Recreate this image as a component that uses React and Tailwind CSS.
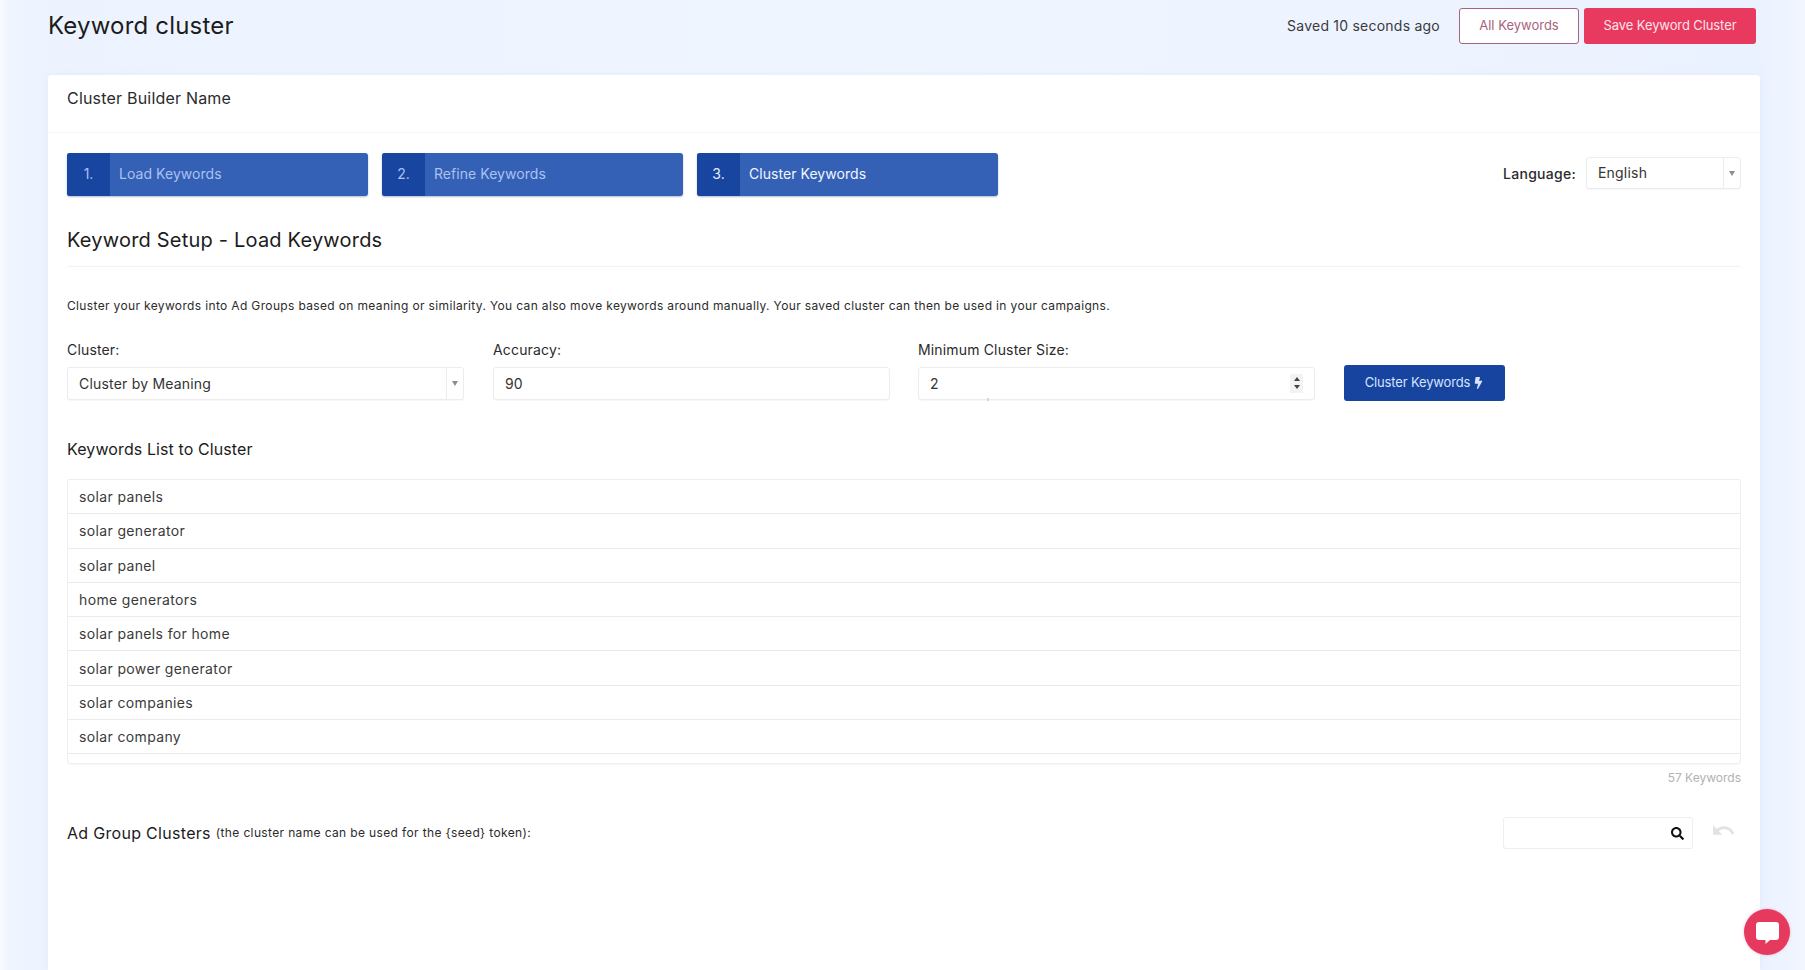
import React from "react";
import { FaSearch, FaBolt } from "react-icons/fa";
import { MdUndo } from "react-icons/md";

const keywords = ["solar panels","solar generator","solar panel","home generators","solar panels for home","solar power generator","solar companies","solar company",""];

function Step({ n, label, active }) {
  return (
    <div className="flex h-[43px] w-[301px] overflow-hidden rounded-[3px] bg-[#3461b5] shadow-[0_1px_2px_rgba(30,60,130,0.35)]">
      <div className={`flex w-[43px] items-center justify-center bg-[#17459f] pb-[2px] text-[14px] ${active ? "text-[#e6eeff]" : "text-[#a9c2f0]"}`}>{n}</div>
      <div className={`flex items-center pb-[2px] pl-[9px] text-[14px] tracking-[0.05px] ${active ? "text-[#f2f6ff]" : "text-[#a9c2f0]"}`}>{label}</div>
    </div>
  );
}

function Caret() {
  return <span className="h-0 w-0 border-x-[3px] border-t-[5px] border-x-transparent border-t-[#8d8d8d]" />;
}

function SelectBox({ value, className, caretW }) {
  return (
    <div className={`flex items-center rounded-[3px] border border-[#ececec] bg-white text-[14px] tracking-[0.2px] text-[#333] shadow-[0_1px_1px_rgba(0,0,0,0.03)] ${className}`}>
      <span className="flex-1 pb-[1px] pl-[11px]">{value}</span>
      <span className={`flex h-full items-center justify-center border-l border-[#ececec] ${caretW}`}><Caret /></span>
    </div>
  );
}

function Field({ label, children, className = "w-[397px]" }) {
  return (
    <div className={`flex flex-col ${className}`}>
      <label className="mb-[8px] flex h-[20px] items-center text-[14px] tracking-[0.16px] text-[#2b2b2b]">{label}</label>
      {children}
    </div>
  );
}

export default function App() {
  return (
    <div className="flex h-[970px] w-full flex-col overflow-hidden bg-[linear-gradient(90deg,#fafcff_0px,#f6f9ff_3px,#eff5ff_8px,#ecf3ff_48px,#eff5ff_50%,#ebf2ff_1762px,#f1f6ff_1805px)] pl-[48px] pr-[45px] font-[Inter,sans-serif]">
      <header className="flex h-[75px] shrink-0 items-start">
        <h1 className="mt-[10px] text-[24px] leading-[32px] font-normal tracking-[0.18px] text-[#1c1c1c]">Keyword cluster</h1>
        <div className="ml-auto mt-[8px] mr-[4px] flex items-center">
          <span className="mr-[19px] pb-[2px] text-[14px] tracking-[0.23px] text-[#3a3a3a]">Saved 10 seconds ago</span>
          <button className="mr-[5px] h-[36px] w-[120px] rounded-[3px] border border-[#a8637f] bg-white text-[13px] text-[#a8637f]">All Keywords</button>
          <button className="h-[36px] w-[172px] rounded-[3px] bg-[#e8395e] text-[13px] tracking-[-0.1px] text-[#fde3e9]">Save Keyword Cluster</button>
        </div>
      </header>

      <main className="flex min-h-0 flex-1 flex-col rounded-t-[3px] bg-white shadow-[0_0_6px_rgba(120,150,210,0.08)]">
        <div className="flex h-[58px] shrink-0 items-start border-b border-[#f6f6f6] px-[19px] pt-[12px] text-[16px] leading-[22px] tracking-[0.2px] text-[#2b2b2b]">Cluster Builder Name</div>

        <div className="flex flex-col pl-[19px] pr-[19px]">
          <div className="mt-[20px] flex items-start gap-[14px]">
            <Step n="1." label="Load Keywords" />
            <Step n="2." label="Refine Keywords" />
            <Step n="3." label="Cluster Keywords" active />
            <div className="ml-auto mt-[4px] flex items-center">
              <span className="mr-[10px] text-[14px] font-medium tracking-[0.28px] text-[#2b2b2b]">Language:</span>
              <SelectBox value="English" className="h-[32px] w-[155px]" caretW="w-[17px]" />
            </div>
          </div>

          <h2 className="mt-[30px] border-b border-[#f3f3f3] pb-[12px] text-[20px] leading-[28px] font-normal tracking-[0.2px] text-[#1c1c1c]">Keyword Setup - Load Keywords</h2>

          <p className="mt-[30px] text-[12px] leading-[18px] tracking-[0.35px] text-[#2b2b2b]">Cluster your keywords into Ad Groups based on meaning or similarity. You can also move keywords around manually. Your saved cluster can then be used in your campaigns.</p>

          <div className="mt-[24px] flex items-end">
            <Field label="Cluster:">
              <SelectBox value="Cluster by Meaning" className="h-[33px]" caretW="w-[17px]" />
            </Field>
            <Field label="Accuracy:" className="ml-[29px] w-[397px]">
              <div className="flex h-[33px] items-center rounded-[3px] border border-[#ececec] pb-[1px] pl-[11px] text-[14px] text-[#333] shadow-[0_1px_1px_rgba(0,0,0,0.03)]">90</div>
            </Field>
            <Field label="Minimum Cluster Size:" className="ml-[28px] w-[397px]">
              <div className="relative flex h-[33px] items-center justify-between rounded-[3px] border border-[#ececec] pb-[1px] pl-[11px] pr-[11px] text-[14px] text-[#333] shadow-[0_1px_1px_rgba(0,0,0,0.03)]">
                2
                <span className="flex h-[19px] w-[13px] flex-col items-center justify-center gap-[4px] bg-[#f3f3f3]">
                  <span className="h-0 w-0 border-x-[3.5px] border-b-[4px] border-x-transparent border-b-[#444]" />
                  <span className="h-0 w-0 border-x-[3.5px] border-t-[4px] border-x-transparent border-t-[#444]" />
                </span>
                <span className="absolute -bottom-[2px] left-[68px] h-[3px] w-[2px] bg-[#d6d6d6]" />
              </div>
            </Field>
            <button className="mb-[-1px] ml-[29px] flex h-[36px] w-[161px] items-center justify-center gap-[4px] rounded-[3px] bg-[#16449f] pr-[1px] text-[13px] tracking-[-0.15px] text-[#d5e3ff]">
              Cluster Keywords <FaBolt className="h-[12px] w-[9px]" />
            </button>
          </div>

          <h3 className="mt-[37px] text-[16px] leading-[24px] font-normal tracking-[0.1px] text-[#1c1c1c]">Keywords List to Cluster</h3>

          <div className="mt-[18px] h-[285px] overflow-hidden rounded-[3px] border border-[#eeeeee] shadow-[0_1px_1px_rgba(0,0,0,0.03)]">
            {keywords.map((k, i) => (
              <div key={i} className="flex h-[34.3px] items-center border-b border-[#ebebeb] pl-[11px] text-[14px] tracking-[0.36px] text-[#3a3a3a]">{k}</div>
            ))}
          </div>

          <div className="mt-[5px] text-right text-[12px] leading-[18px] text-[#b2b2b2]">57 Keywords</div>

          <div className="mt-[30px] flex items-center">
            <span className="text-[16px] font-normal tracking-[0.3px] text-[#1c1c1c]">Ad Group Clusters</span>
            <span className="ml-[5px] text-[12px] tracking-[0.36px] text-[#2b2b2b]">(the cluster name can be used for the {"{seed}"} token):</span>
            <div className="ml-auto flex h-[32px] w-[190px] items-center justify-end rounded-[3px] border border-[#eeeeee] pr-[8px]">
              <FaSearch className="h-[13px] w-[13px] text-[#111]" />
            </div>
            <MdUndo className="mb-[6px] ml-[18px] mr-[5px] h-[25px] w-[25px] text-[#e2e2e2]" />
          </div>
        </div>
      </main>

      <button className="fixed left-[1744px] top-[909px] flex h-[46px] w-[46px] items-center justify-center rounded-full bg-[#e5395e] shadow-[0_0_3px_rgba(229,57,94,0.35)]">
        <svg viewBox="0 0 23 22" className="mt-[1px] h-[22px] w-[23px]">
          <path d="M3 0h17a3 3 0 0 1 3 3v12a3 3 0 0 1-3 3h-6l-4.5 4v-4H3a3 3 0 0 1-3-3V3a3 3 0 0 1 3-3z" fill="#fff" />
        </svg>
      </button>
    </div>
  );
}
